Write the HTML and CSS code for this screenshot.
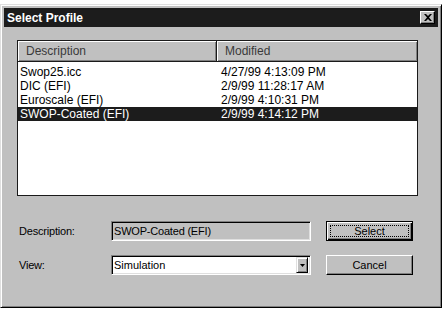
FILE: index.html
```html
<!DOCTYPE html>
<html>
<head>
<meta charset="utf-8">
<link rel="stylesheet" href="styles.css">
</head>
<body>
<div class="window">
  <div class="titlebar">
    <span class="title">Select Profile</span>
    <span class="close"><svg width="8" height="7" viewBox="0 0 8 7"><path d="M0 0h2l2 2 2-2h2L5 3.5 8 7H6L4 5 2 7H0l3-3.5z" fill="#000"/></svg></span>
  </div>
  <div class="content">
    <div class="list">
      <div class="header">
        <div class="hcell c1">Description</div>
        <div class="hcell c2">Modified</div>
      </div>
      <div class="rows">
        <div class="row"><span class="c1">Swop25.icc</span><span class="c2">4/27/99 4:13:09 PM</span></div>
        <div class="row"><span class="c1">DIC (EFI)</span><span class="c2">2/9/99 11:28:17 AM</span></div>
        <div class="row"><span class="c1">Euroscale (EFI)</span><span class="c2">2/9/99 4:10:31 PM</span></div>
        <div class="row selected"><span class="c1">SWOP-Coated (EFI)</span><span class="c2">2/9/99 4:14:12 PM</span></div>
      </div>
    </div>
    <div class="form">
      <div class="frow first">
        <span class="label">Description:</span>
        <div class="field disabled"><span class="ftext">SWOP-Coated (EFI)</span></div>
        <div class="btn default"><span class="focus">Select</span></div>
      </div>
      <div class="frow">
        <span class="label">View:</span>
        <div class="field combo"><span class="ftext plain">Simulation</span><span class="arrow"><svg width="5" height="3" viewBox="0 0 5 3"><path d="M0 0h5L2.5 3z" fill="#000"/></svg></span></div>
        <div class="btn"><span class="bt">Cancel</span></div>
      </div>
    </div>
  </div>
</div>
</body>
</html>
```

FILE: styles.css
```css
* { box-sizing: border-box; }
html, body { margin: 0; padding: 0; }
body {
  background: #fff;
  width: 442px;
  height: 310px;
  overflow: hidden;
  font-family: "Liberation Sans", Arial, sans-serif;
}
.window {
  margin-top: 4px;
  width: 442px;
  height: 304px;
  background: #c0c0c0;
  border-top: 1px solid #dfdfdf;
  border-left: 1px solid #dfdfdf;
  border-right: 1px solid #000;
  border-bottom: 1px solid #000;
  box-shadow: inset 1px 1px 0 #fff, inset -1px -1px 0 #808080;
  padding: 3px;
  display: flex;
  flex-direction: column;
}
.titlebar {
  height: 19px;
  background: #1c1c1c;
  display: flex;
  align-items: center;
  justify-content: space-between;
  padding: 0 3px 0 3px;
}
.title {
  color: #fff;
  font-weight: bold;
  font-size: 12px;
}
.close {
  width: 15px;
  height: 13px;
  background: #c0c0c0;
  border-top: 1px solid #fff;
  border-left: 1px solid #fff;
  border-right: 1px solid #000;
  border-bottom: 1px solid #000;
  box-shadow: inset -1px -1px 0 #808080;
  display: flex;
  align-items: center;
  justify-content: center;
  padding-bottom: 1px;
}
.close svg { display: block; }
.content {
  padding: 13px 0 0 13px;
}
.list {
  width: 401px;
  height: 156px;
  background: #fff;
  border: 1px solid #1a1a1a;
  display: flex;
  flex-direction: column;
}
.header {
  height: 21px;
  display: flex;
  background: #c0c0c0;
  border-bottom: 1px solid #1a1a1a;
}
.hcell {
  height: 100%;
  font-size: 12px;
  color: #3a3a3a;
  display: flex;
  align-items: center;
  box-shadow: inset 1px 1px 0 #fff, inset -1px -1px 0 #808080;
}
.hcell.c1 {
  width: 199px;
  padding-left: 8px;
  border-right: 1px solid #1a1a1a;
}
.hcell.c2 {
  flex: 1;
  padding-left: 8px;
}
.rows {
  padding-top: 3px;
}
.row {
  height: 14px;
  display: flex;
  align-items: center;
  font-size: 12px;
  color: #000;
}
.row .c1 { width: 203px; padding-left: 2px; }
.row .c2 { flex: 1; }
.row.selected {
  background: #1c1c1c;
  color: #fff;
}
.form {
  padding-top: 25px;
  padding-left: 2px;
  display: flex;
  flex-direction: column;
  gap: 14px;
}
.frow {
  display: flex;
  align-items: center;
  height: 20px;
}
.label {
  width: 92px;
  font-size: 11px;
  letter-spacing: -0.2px;
  color: #000;
}
.field {
  width: 200px;
  height: 20px;
  border-top: 1px solid #808080;
  border-left: 1px solid #808080;
  border-right: 1px solid #fff;
  border-bottom: 1px solid #fff;
  box-shadow: inset 1px 1px 0 #000, inset -1px -1px 0 #dfdfdf;
  display: flex;
  align-items: center;
  padding-left: 2px;
}
.field.disabled { background: #c0c0c0; }
.field.combo { background: #fff; padding-right: 2px; }
.ftext {
  font-size: 11px;
  letter-spacing: -0.2px;
  color: #000;
  flex: 1;
}
.ftext.plain { letter-spacing: 0; }
.arrow {
  width: 12px;
  height: 16px;
  background: #c0c0c0;
  border-top: 1px solid #dfdfdf;
  border-left: 1px solid #dfdfdf;
  border-right: 1px solid #000;
  border-bottom: 1px solid #000;
  box-shadow: inset 1px 1px 0 #fff, inset -1px -1px 0 #808080;
  display: flex;
  align-items: center;
  justify-content: center;
}
.arrow svg { display: block; }
.btn {
  margin-left: 15px;
  width: 87px;
  height: 20px;
  background: #c0c0c0;
  border-top: 1px solid #fff;
  border-left: 1px solid #fff;
  border-right: 1px solid #000;
  border-bottom: 1px solid #000;
  box-shadow: inset -1px -1px 0 #808080;
  display: flex;
  align-items: center;
  justify-content: center;
  font-size: 11px;
  color: #000;
}
.btn.default {
  border: 1px solid #000;
  box-shadow: inset 1px 1px 0 #fff, inset -1px -1px 0 #000, inset -2px -2px 0 #808080;
  padding: 3px;
}
.focus {
  flex: 1;
  height: 100%;
  border: 1px dotted #000;
  display: flex;
  align-items: center;
  justify-content: center;
}
```
